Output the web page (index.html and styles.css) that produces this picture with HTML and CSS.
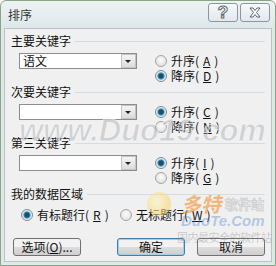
FILE: index.html
```html
<!DOCTYPE html>
<html lang="zh-CN">
<head>
    <meta charset="UTF-8">
    <title>排序</title>
    <link rel="stylesheet" href="styles.css">
</head>
<body>
    <div class="window">
        <div class="titlebar">
            <span class="title">排序</span>
            <div class="caption-btns">
                <span class="cap-btn help">?</span>
                <span class="cap-btn close">
                    <svg width="14" height="11" viewBox="0 0 14 11">
                        <path d="M2 1 L5 1 L7 3.5 L9 1 L12 1 L8.5 5.5 L12 10 L9 10 L7 7.5 L5 10 L2 10 L5.5 5.5 Z" fill="#fff" stroke="#5c6770" stroke-width="1" stroke-linejoin="round"/>
                    </svg>
                </span>
            </div>
        </div>

        <div class="client">
            <div class="group">
                <div class="group-label">主要关键字</div>
                <div class="group-row">
                    <div class="combo"><span class="combo-text">语文</span><span class="combo-arrow"></span></div>
                    <div class="radios">
                        <div class="radio"><span class="dot"></span>升序(<u>A</u>)</div>
                        <div class="radio checked"><span class="dot"></span>降序(<u>D</u>)</div>
                    </div>
                </div>
            </div>

            <div class="group">
                <div class="group-label">次要关键字</div>
                <div class="group-row">
                    <div class="combo"><span class="combo-text"></span><span class="combo-arrow"></span></div>
                    <div class="radios">
                        <div class="radio checked"><span class="dot"></span>升序(<u>C</u>)</div>
                        <div class="radio"><span class="dot"></span>降序(<u>N</u>)</div>
                    </div>
                </div>
            </div>

            <div class="group">
                <div class="group-label">第三关键字</div>
                <div class="group-row">
                    <div class="combo"><span class="combo-text"></span><span class="combo-arrow"></span></div>
                    <div class="radios">
                        <div class="radio checked"><span class="dot"></span>升序(<u>I</u>)</div>
                        <div class="radio"><span class="dot"></span>降序(<u>G</u>)</div>
                    </div>
                </div>
            </div>

            <div class="group-label">我的数据区域</div>
            <div class="header-row">
                <div class="radio checked wide"><span class="dot"></span>有标题行(<u>R</u>)</div>
                <div class="radio"><span class="dot"></span>无标题行(<u>W</u>)</div>
            </div>

            <div class="buttons">
                <span class="btn">选项(<u>O</u>)...</span>
                <div class="btn-group">
                    <span class="btn default">确定</span>
                    <span class="btn">取消</span>
                </div>
            </div>
        </div>

        <!-- watermarks over the picture -->
        <div class="wm-site">www.Duo19.com</div>
        <div class="wm-logo">
            <span class="wm-ball"></span>
            <span class="wm-duote">多特</span><span class="wm-soft">软件站</span>
        </div>
        <div class="wm-com">DuoTe.Com</div>
        <div class="wm-slogan">国内最安全的软件站</div>
    </div>
</body>
</html>
```

FILE: styles.css
```css
* {
    box-sizing: border-box;
}

body {
    margin: 0;
    background: #ffffff;
    font-family: "Noto Sans CJK SC", "Liberation Sans", sans-serif;
    font-size: 12px;
    color: #111;
}

.window {
    position: relative;
    width: 276px;
    height: 266px;
    border: 1px solid #87a682;
    border-radius: 6px 6px 0 0;
    background: linear-gradient(#eef2f4, #dfe7eb 28px, #dfe7eb);
    padding: 0 3px 3px;
    display: flex;
    flex-direction: column;
    overflow: hidden;
}

.titlebar {
    height: 27px;
    display: flex;
    align-items: flex-start;
    justify-content: space-between;
}

.title {
    margin: 7px 0 0 4px;
    line-height: 14px;
    color: #333;
}

.caption-btns {
    display: flex;
    gap: 2px;
    margin: 2px 2px 0 0;
}

.cap-btn {
    width: 30px;
    height: 19px;
    border: 1px solid #8797a3;
    border-radius: 3px;
    background: linear-gradient(#f7f9fa, #e3e8ec);
    display: flex;
    align-items: center;
    justify-content: center;
}

.help {
    font-family: "Liberation Sans", sans-serif;
    font-weight: bold;
    font-size: 17px;
    color: #fff;
    -webkit-text-stroke: 1px #5c6770;
}

.client {
    flex: 1;
    border: 1px solid #b7c3c9;
    background: #f0f0f0;
    padding: 4px 6px 0 0;
}

.group {
    margin-bottom: 1px;
}

.group-label {
    height: 16px;
    line-height: 16px;
    padding-left: 6px;
    display: flex;
    align-items: center;
    gap: 4px;
}

.group-label::after {
    content: "";
    flex: 1;
    height: 1px;
    background: #d6dde2;
    margin-top: 1px;
}

.group-row {
    display: flex;
    margin-top: 4px;
    height: 30px;
}

.combo {
    width: 118px;
    height: 16px;
    margin-left: 14px;
    border: 1px solid #8d8d8d;
    background: #fff;
    display: flex;
    align-items: center;
}

.combo-text {
    flex: 1;
    padding-left: 3px;
    line-height: 14px;
}

.combo-arrow {
    position: relative;
    width: 15px;
    height: 14px;
    border: 1px solid #c4c4c4;
    background: linear-gradient(#f4f4f4, #dcdcdc);
}

.combo-arrow::after {
    content: "";
    position: absolute;
    left: 3px;
    top: 5px;
    border-left: 3px solid transparent;
    border-right: 3px solid transparent;
    border-top: 3px solid #222;
}

.radios {
    margin-left: 18px;
    display: flex;
    flex-direction: column;
}

.radio {
    height: 15px;
    display: flex;
    align-items: center;
    gap: 4px;
    line-height: 15px;
}

.radio u {
    text-decoration: underline;
}

.dot {
    width: 12px;
    height: 12px;
    border-radius: 50%;
    border: 1px solid #a2a5a7;
    background: radial-gradient(circle at 50% 40%, #fbfbfb, #dadada);
}

.radio.checked .dot {
    border-color: #7a8d98;
    background: radial-gradient(circle, #17506f 0 2px, #3f8ab3 3px, #cfe0ea 4px, #eef3f6 5px);
}

.header-row {
    display: flex;
    margin-top: 5px;
    padding-left: 16px;
}

.radio.wide {
    width: 99px;
}

.buttons {
    display: flex;
    margin-top: 16px;
    padding-left: 8px;
}

.btn-group {
    margin-left: auto;
    display: flex;
    gap: 12px;
}

.btn {
    width: 68px;
    height: 18px;
    border: 1px solid #707070;
    border-radius: 3px;
    background: linear-gradient(#f2f2f2 50%, #dddddd 50%, #cfcfcf);
    display: flex;
    align-items: center;
    justify-content: center;
    line-height: 16px;
}

.btn.default {
    border-color: #3c7fb1;
    box-shadow: inset 0 0 0 1px #9fd0ea;
}

.wm-site {
    position: absolute;
    left: 18px;
    top: 112px;
    font-family: "Liberation Sans", sans-serif;
    font-weight: bold;
    font-style: italic;
    font-size: 31px;
    color: rgba(165, 170, 175, 0.45);
    -webkit-text-stroke: 1px rgba(255, 255, 255, 0.6);
}

.wm-logo {
    position: absolute;
    left: 146px;
    top: 188px;
    display: flex;
    align-items: center;
    opacity: 0.55;
}

.wm-ball {
    width: 24px;
    height: 24px;
    border-radius: 50%;
    background: radial-gradient(circle at 40% 40%, #fff7c0, #f6c23a);
    margin-right: 10px;
}

.wm-duote {
    font-size: 20px;
    font-weight: bold;
    color: #f08a1e;
    font-style: italic;
}

.wm-soft {
    font-size: 13px;
    font-weight: bold;
    color: #fff;
    -webkit-text-stroke: 1px #b9b9b9;
    margin-left: 4px;
}

.wm-com {
    position: absolute;
    left: 180px;
    top: 211px;
    font-family: "Liberation Sans", sans-serif;
    font-weight: bold;
    font-style: italic;
    font-size: 15px;
    color: rgba(60, 120, 200, 0.35);
}

.wm-slogan {
    position: absolute;
    left: 176px;
    top: 228px;
    font-size: 11px;
    letter-spacing: -0.5px;
    color: rgba(120, 120, 120, 0.35);
}
```
